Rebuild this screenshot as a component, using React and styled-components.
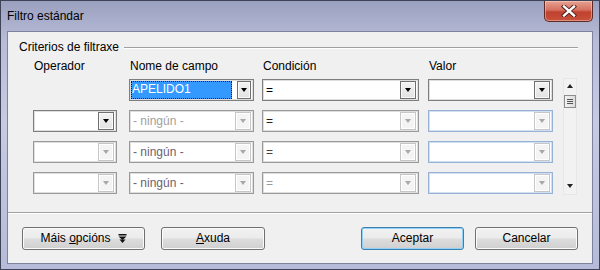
import React from "react";
import styled, { createGlobalStyle } from "styled-components";

const GlobalStyle = createGlobalStyle`
  html, body { margin: 0; padding: 0; background: #fff; }
  body {
    font-family: "Liberation Sans", Arial, sans-serif;
    font-size: 12px;
    color: #000;
  }
`;

const Window = styled.div`
  width: 600px;
  height: 270px;
  box-sizing: border-box;
  display: flex;
  flex-direction: column;
  border: 1px solid #3f4358;
  background: linear-gradient(180deg, #9aa0bf 0%, #b8bcd8 15%, #c6cae2 45%, #b6bbd9 100%);
`;

const TitleBar = styled.div`
  height: 30px;
  flex: none;
  display: flex;
  justify-content: space-between;
  align-items: flex-start;
`;

const Title = styled.div`
  padding: 8px 0 0 6px;
  line-height: 15px;
  color: #000;
`;

const CloseButton = styled.div`
  width: 49px;
  height: 21px;
  margin-right: 6px;
  box-sizing: border-box;
  border: 1px solid #5e2a26;
  border-top: none;
  border-radius: 0 0 5px 5px;
  background: linear-gradient(180deg, #e7a393 0%, #d5705f 45%, #c0412f 55%, #c8523c 100%);
  box-shadow: inset 0 0 0 1px rgba(255, 220, 210, 0.45);
  display: flex;
  align-items: center;
  justify-content: center;
`;

const Client = styled.div`
  flex: 1;
  margin: 0 6px 5px 6px;
  border: 1px solid #7d839f;
  background: #f0f0f0;
  display: flex;
  flex-direction: column;
`;

const Body = styled.div`
  flex: 1;
  padding: 8px 14px 0 11px;
`;

const GroupHeader = styled.div`
  display: flex;
  align-items: center;
  gap: 5px;
  height: 15px;
  line-height: 15px;
`;

const GroupLine = styled.div`
  flex: 1;
  height: 0;
  border-top: 1px solid #a0a0a0;
  border-bottom: 1px solid #ffffff;
`;

const Columns = styled.div`
  display: grid;
  grid-template-columns: 96px 133px 166px 135px 14px;
  margin-left: 14px;
`;

const HeaderRow = styled(Columns)`
  margin-top: 4px;
  height: 14px;
  line-height: 14px;
  margin-bottom: 6px;
`;

const HeaderCell = styled.div`
  padding-left: 1px;
  white-space: nowrap;
`;

const Rows = styled(Columns)`
  grid-template-rows: repeat(4, 22px);
  row-gap: 9px;
`;

const Combo = styled.div`
  width: ${(p) => p.$w}px;
  height: 22px;
  box-sizing: border-box;
  border: 1px solid ${(p) => (p.$blue ? "#98b2d6" : p.$dark ? "#7e7e7e" : "#9a9a9a")};
  box-shadow: inset 0 0 0 1px ${(p) => (p.$blue ? "#d2e0f2" : "#dedede")};
  background: #fff;
  display: flex;
  align-items: center;
  padding: 0 2px 0 3px;
  grid-column: ${(p) => p.$col};
`;

const ComboText = styled.span`
  flex: 1;
  color: ${(p) => p.$color || "#000"};
  white-space: nowrap;
  overflow: hidden;
  line-height: 16px;
`;

const Selection = styled.span`
  flex: none;
  width: 101px;
  margin-left: -2px;
  margin-right: auto;
  height: 18px;
  box-sizing: border-box;
  background: #3399ff;
  color: #fff;
  line-height: 16px;
  padding-left: 1px;
  outline: 1px dotted #1a1a1a;
  outline-offset: -1px;
`;

const DropButton = styled.div`
  flex: none;
  width: ${(p) => p.$w || 16}px;
  height: 18px;
  box-sizing: border-box;
  border: 1px solid ${(p) => (p.$off ? "#c6c6c6" : "#6f6f6f")};
  background: ${(p) =>
    p.$off ? "#f4f4f4" : "linear-gradient(180deg, #f3f3f3 0%, #e2e2e2 100%)"};
  box-shadow: inset 0 0 0 1px ${(p) => (p.$off ? "#ffffff" : "#fafafa")};
  display: flex;
  align-items: center;
  justify-content: center;
`;

const Arrow = styled.div`
  width: 0;
  height: 0;
  border-left: 3.5px solid transparent;
  border-right: 3.5px solid transparent;
  border-top: 4px solid ${(p) => (p.$off ? "#a8a8a8" : "#000")};
`;

const ScrollBar = styled.div`
  grid-column: 5;
  grid-row: 1 / span 4;
  margin-top: -1px;
  height: 117px;
  box-sizing: border-box;
  border: 1px solid #e6e6e6;
  background: #f2f2f2;
  display: flex;
  flex-direction: column;
  align-items: center;
  padding-top: 5px;
`;

const ScrollArrow = styled.div`
  width: 0;
  height: 0;
  border-left: 3.5px solid transparent;
  border-right: 3.5px solid transparent;
  ${(p) => (p.$up ? "border-bottom: 4px solid #222;" : "border-top: 4px solid #222;")}
`;

const ScrollEnd = styled.div`
  margin-bottom: 6px;
`;

const Thumb = styled.div`
  width: 12px;
  height: 13px;
  box-sizing: border-box;
  margin-top: 7px;
  border: 1px solid #8e8e8e;
  background: linear-gradient(90deg, #f2f2f2, #dcdcdc);
  display: flex;
  flex-direction: column;
  justify-content: center;
  align-items: center;
  gap: 1px;
`;

const Grip = styled.div`
  width: 6px;
  height: 1px;
  background: #555;
`;

const Spacer = styled.div`
  flex: 1;
`;

const EmptyCell = styled.div`
  grid-column: 1;
`;

const Separator = styled.div`
  height: 0;
  border-top: 1px solid #a0a0a0;
  border-bottom: 1px solid #ffffff;
`;

const Footer = styled.div`
  display: flex;
  align-items: center;
  padding: 13px 14px 13px 14px;
`;

const Button = styled.div`
  width: ${(p) => p.$w}px;
  height: 23px;
  box-sizing: border-box;
  margin-right: ${(p) => p.$gap || 0}px;
  margin-left: ${(p) => (p.$push ? "auto" : "0")};
  border: 1px solid ${(p) => (p.$default ? "#3c7fb1" : "#707070")};
  border-radius: 3px;
  background: linear-gradient(180deg, #f2f2f2 0%, #ebebeb 48%, #dddddd 52%, #cfcfcf 100%);
  box-shadow: inset 0 0 0 1px ${(p) => (p.$default ? "#90d2f6" : "#fbfbfb")};
  display: flex;
  align-items: center;
  justify-content: center;
  gap: 7px;
  line-height: 15px;
  white-space: nowrap;
`;

const Key = styled.span`
  text-decoration: underline;
`;

const MoreIcon = () => (
  <svg width="9" height="9" viewBox="0 0 9 9">
    <rect x="0.5" y="0" width="8" height="1.5" fill="#111" />
    <path d="M0.5 2.5 H8.5 L4.5 6 Z" fill="#111" />
    <path d="M1.5 5.5 H7.5 L4.5 9 Z" fill="#111" />
  </svg>
);

const CloseIcon = () => (
  <svg width="16" height="12" viewBox="0 0 16 12">
    <path d="M3 1.5 L13 10.5 M13 1.5 L3 10.5" stroke="#4a1c18" strokeWidth="4.2" strokeLinecap="square" />
    <path d="M3 1.5 L13 10.5 M13 1.5 L3 10.5" stroke="#ffffff" strokeWidth="2.4" strokeLinecap="square" />
  </svg>
);

const ComboBox = ({ w, col, text, color, off, blue, dark, selected, btnW }) => (
  <Combo $w={w} $col={col} $blue={blue} $dark={dark}>
    {selected ? <Selection>{selected}</Selection> : <ComboText $color={color}>{text}</ComboText>}
    <DropButton $off={off} $w={btnW}>
      <Arrow $off={off} />
    </DropButton>
  </Combo>
);

const rows = [
  {
    op: null,
    field: { selected: "APELIDO1", btnW: 14, dark: true },
    cond: { text: "=", off: false, dark: true },
    value: { off: false, dark: true },
  },
  {
    op: { off: false, dark: true },
    field: { text: "- ningún -", color: "#a0a0a0", off: true },
    cond: { text: "=", color: "#222", off: true },
    value: { off: true, blue: true },
  },
  {
    op: { off: true },
    field: { text: "- ningún -", color: "#6d5f6f", off: true },
    cond: { text: "=", color: "#444", off: true },
    value: { off: true, blue: true },
  },
  {
    op: { off: true },
    field: { text: "- ningún -", color: "#6d5f6f", off: true },
    cond: { text: "=", color: "#9a9a9a", off: true },
    value: { off: true, blue: true },
  },
];

export default function App() {
  return (
    <>
      <GlobalStyle />
      <Window>
        <TitleBar>
          <Title>Filtro estándar</Title>
          <CloseButton>
            <CloseIcon />
          </CloseButton>
        </TitleBar>
        <Client>
          <Body>
            <GroupHeader>
              <span>Criterios de filtraxe</span>
              <GroupLine />
            </GroupHeader>
            <HeaderRow>
              <HeaderCell>Operador</HeaderCell>
              <HeaderCell>Nome de campo</HeaderCell>
              <HeaderCell>Condición</HeaderCell>
              <HeaderCell>Valor</HeaderCell>
            </HeaderRow>
            <Rows>
              {rows.map((r, i) => (
                <React.Fragment key={i}>
                  {r.op ? <ComboBox w={84} col={1} {...r.op} /> : <EmptyCell />}
                  <ComboBox w={125} col={2} {...r.field} />
                  <ComboBox w={157} col={3} {...r.cond} />
                  <ComboBox w={125} col={4} {...r.value} />
                </React.Fragment>
              ))}
              <ScrollBar>
                <ScrollArrow $up />
                <Thumb>
                  <Grip />
                  <Grip />
                  <Grip />
                </Thumb>
                <Spacer />
                <ScrollEnd>
                  <ScrollArrow />
                </ScrollEnd>
              </ScrollBar>
            </Rows>
          </Body>
          <Separator />
          <Footer>
            <Button $w={123} $gap={16}>
              <span>
                Máis <Key>o</Key>pcións
              </span>
              <MoreIcon />
            </Button>
            <Button $w={104}>
              <span>
                <Key>A</Key>xuda
              </span>
            </Button>
            <Button $w={103} $gap={11} $push $default>
              Aceptar
            </Button>
            <Button $w={103}>Cancelar</Button>
          </Footer>
        </Client>
      </Window>
    </>
  );
}
